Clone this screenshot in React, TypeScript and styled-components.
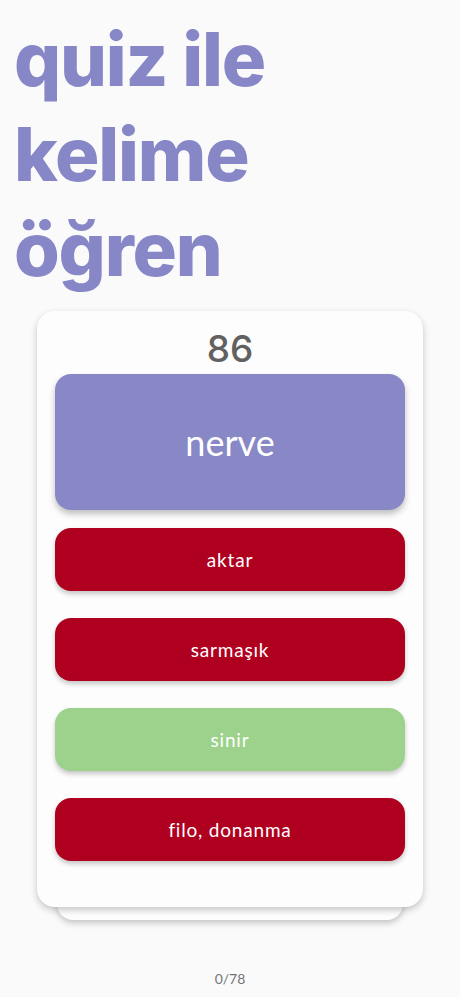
import React from "react";
import styled, { createGlobalStyle } from "styled-components";

const GlobalStyle = createGlobalStyle`
    html, body {
        margin: 0;
        padding: 0;
        background: #fafafa;
    }
    body {
        font-family: "Lato", "Noto Sans", sans-serif;
    }
`;

const StyledPage = styled.main`
    display: flex;
    flex-direction: column;
    width: 460px;
    height: 997px;
    box-sizing: border-box;
    background: #fafafa;
`;

const StyledTitle = styled.h1`
    margin: 0;
    padding: 12px 0 0 14px;
    font-family: "Inter", "Lato", sans-serif;
    font-weight: 800;
    font-size: 74px;
    line-height: 95px;
    letter-spacing: -1.2px;
    color: #8787c7;
`;

const StyledStack = styled.div`
    position: relative;
    margin: 14px 37px 0 37px;
`;

const StyledBackSheet = styled.div`
    position: absolute;
    left: 20px;
    right: 20px;
    bottom: -13px;
    height: 40px;
    background: #fdfdfd;
    border-radius: 0 0 16px 16px;
    box-shadow: 0 3px 6px rgba(0, 0, 0, 0.22);
`;

const StyledCard = styled.section`
    position: relative;
    display: flex;
    flex-direction: column;
    align-items: stretch;
    padding: 14px 18px 46px 18px;
    background: #fdfdfd;
    border-radius: 18px;
    box-shadow: 0 3px 7px rgba(0, 0, 0, 0.22);
`;

const StyledScore = styled.div`
    text-align: center;
    font-family: "Inter", sans-serif;
    font-weight: 500;
    font-size: 37px;
    line-height: 48px;
    color: #616161;
`;

const StyledWordBox = styled.div`
    display: flex;
    align-items: center;
    justify-content: center;
    height: 136px;
    margin-top: 1px;
    border-radius: 16px;
    background: #8888c7;
    color: #ffffff;
    font-family: "Lato", sans-serif;
    font-weight: 400;
    font-size: 36px;
    box-shadow: 0 4px 6px rgba(0, 0, 0, 0.25);
`;

const StyledOptions = styled.div`
    display: flex;
    flex-direction: column;
    gap: 27px;
    margin-top: 18px;
`;

const StyledOption = styled.button<{ $correct?: boolean }>`
    display: flex;
    align-items: center;
    justify-content: center;
    height: 63px;
    border: none;
    border-radius: 16px;
    background: ${({ $correct }) => ($correct ? "#9cd28b" : "#b00020")};
    color: #ffffff;
    font-family: "Lato", sans-serif;
    font-size: 19px;
    letter-spacing: 0.8px;
    box-shadow: 0 3px 5px rgba(0, 0, 0, 0.22);
    cursor: pointer;
`;

const StyledProgress = styled.div`
    margin-top: auto;
    padding-bottom: 10px;
    text-align: center;
    font-family: "Lato", sans-serif;
    font-size: 14px;
    color: #757575;
`;

const OPTIONS = [
    { text: "aktar", correct: false },
    { text: "sarmaşık", correct: false },
    { text: "sinir", correct: true },
    { text: "filo, donanma", correct: false },
];

const App: React.FC = () => (
    <>
        <GlobalStyle />
        <StyledPage>
            <StyledTitle>
                quiz ile
                <br />
                kelime
                <br />
                öğren
            </StyledTitle>

            <StyledStack>
                <StyledBackSheet />
                <StyledCard>
                    <StyledScore>86</StyledScore>
                    <StyledWordBox>nerve</StyledWordBox>
                    <StyledOptions>
                        {OPTIONS.map((option) => (
                            <StyledOption key={option.text} $correct={option.correct}>
                                {option.text}
                            </StyledOption>
                        ))}
                    </StyledOptions>
                </StyledCard>
            </StyledStack>

            <StyledProgress>0/78</StyledProgress>
        </StyledPage>
    </>
);

export default App;
